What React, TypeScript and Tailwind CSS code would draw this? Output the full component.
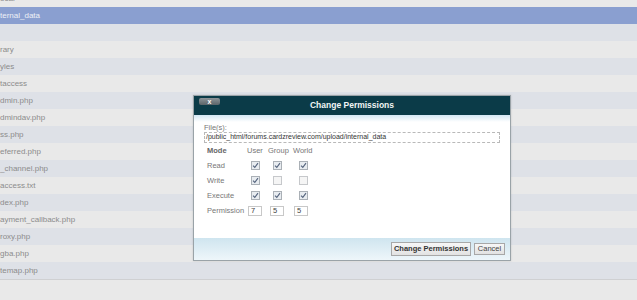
import React from 'react';

const rows = [
  { name: 'ocal', dark: false },
  { name: 'ternal_data', selected: true },
  { name: '', dark: true },
  { name: 'rary', dark: false },
  { name: 'yles', dark: true },
  { name: 'taccess', dark: false },
  { name: 'dmin.php', dark: true },
  { name: 'dmindav.php', dark: false },
  { name: 'ss.php', dark: true },
  { name: 'eferred.php', dark: false },
  { name: '_channel.php', dark: true },
  { name: 'access.txt', dark: false },
  { name: 'dex.php', dark: true },
  { name: 'ayment_callback.php', dark: false },
  { name: 'roxy.php', dark: true },
  { name: 'gba.php', dark: false },
  { name: 'temap.php', dark: true },
];

function Check({ on }: { on: boolean }) {
  return (
    <span className={`flex h-[9px] w-[9px] items-center justify-center border ${on ? 'border-[#aab0b6] bg-[#e8ecf0]' : 'border-[#c6c8cb] bg-[#f5f5f5]'}`}>
      {on && (
        <svg width="7" height="7" viewBox="0 0 7 7">
          <path d="M1 3.6 L2.8 5.4 L6 1.2" fill="none" stroke="#56657e" strokeWidth="1.1" />
        </svg>
      )}
    </span>
  );
}

const perms = [
  { label: 'Read', vals: [true, true, true] },
  { label: 'Write', vals: [true, false, false] },
  { label: 'Execute', vals: [true, true, true] },
];

const checkOffsets = ['ml-[4px]', 'ml-[5px]', 'ml-[6px]'];

export default function App() {
  return (
    <div className="relative h-[300px] w-[637px] overflow-hidden bg-[#e9e9e9] font-['Liberation_Sans',Arial,sans-serif]">
      {/* file list behind the mask */}
      <div className="-mt-[10px] flex flex-col border-b border-[#cfd0d2]">
        {rows.map((r, i) => (
          <div
            key={i}
            className={`flex h-[17px] items-center text-[8px] ${r.selected ? 'bg-[#8a9fd0] text-[#eef0f6]' : r.dark ? 'bg-[#dee1e7] text-[#8c8c8c]' : 'bg-[#e9e9e9] text-[#8c8c8c]'}`}
          >
            {r.name}
          </div>
        ))}
      </div>

      {/* dialog */}
      <div className="absolute left-[193px] top-[95px] flex w-[318px] flex-col border border-[#9aa3a8] bg-white shadow-[0_0_2px_rgba(0,0,0,0.15)]">
        <div className="relative flex h-[19px] items-center justify-center bg-[#0b3b48]">
          <div className="absolute left-[5px] top-[2px] flex h-[7px] w-[21px] items-center justify-center rounded-[2px] bg-gradient-to-b from-[#8e9599] to-[#5c6469] text-[7px] font-bold leading-none text-white">
            x
          </div>
          <span className="text-[8.5px] font-bold text-[#f2f5f6]">Change Permissions</span>
        </div>

        <div className="flex h-[123px] flex-col bg-gradient-to-b from-[#d3e7f4] via-white to-white bg-[length:100%_14px] bg-no-repeat px-[10px] pt-[8px]">
          <div className="text-[7.5px] leading-[9px] text-[#777]">File(s):</div>
          <div className="flex h-[11px] w-[296px] items-center border border-dashed border-[#b9b9b9] bg-white px-[1px] text-[7px] text-[#333]">
            /public_html/forums.cardzreview.com/upload/internal_data
          </div>

          <div className="grid grid-cols-[40px_21px_25px_30px] pl-[3px] text-[7.5px] text-[#777]">
            <div className="flex h-[15px] items-center font-bold text-[#666]">Mode</div>
            <div className="flex h-[15px] items-center">User</div>
            <div className="flex h-[15px] items-center">Group</div>
            <div className="flex h-[15px] items-center">World</div>

            {perms.map((p) => (
              <React.Fragment key={p.label}>
                <div className="flex h-[15px] items-center">{p.label}</div>
                {p.vals.map((v, j) => (
                  <div key={j} className={`flex h-[15px] items-center ${checkOffsets[j]}`}>
                    <Check on={v} />
                  </div>
                ))}
              </React.Fragment>
            ))}

            <div className="flex h-[16px] items-center">Permission</div>
            {['7', '5', '5'].map((v, j) => (
              <div key={j} className="flex h-[16px] items-center">
                <div className={`flex h-[10px] w-[14px] items-center border border-[#c8c8c8] bg-white px-[2px] text-[7.5px] text-[#444] ${j === 1 ? 'ml-[2px]' : 'ml-[1px]'}`}>
                  {v}
                </div>
              </div>
            ))}
          </div>
        </div>

        <div className="flex h-[22px] items-center justify-end gap-[3px] bg-gradient-to-b from-[#cfe5ef] to-[#eef6fa] pr-[5px]">
          <button className="flex h-[14px] w-[80px] items-center justify-center border border-[#a8a8a8] bg-gradient-to-b from-[#f7f7f7] to-[#e2e2e2] text-[7.5px] font-bold text-[#333]">
            Change Permissions
          </button>
          <button className="flex h-[12px] w-[31px] items-center justify-center border border-[#a8a8a8] bg-gradient-to-b from-[#f7f7f7] to-[#e2e2e2] text-[7.5px] text-[#444]">
            Cancel
          </button>
        </div>
      </div>
    </div>
  );
}
